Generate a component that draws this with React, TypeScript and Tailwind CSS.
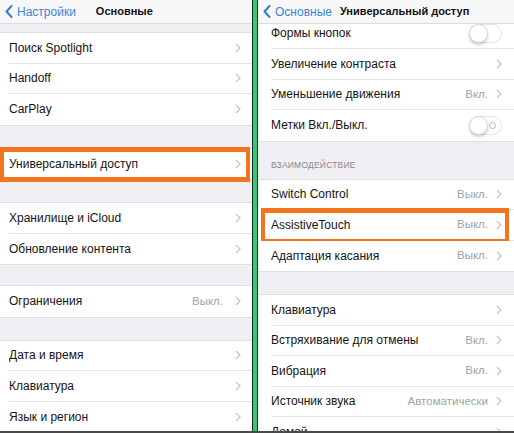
import React from "react";

const FONT = { fontFamily: '"Liberation Sans", Arial, sans-serif' };

function Chevron() {
  return (
    <svg width="6" height="10" viewBox="0 0 6 10" className="shrink-0">
      <polyline points="1,1 5,5 1,9" fill="none" stroke="#c4c4c9" strokeWidth="1.3" />
    </svg>
  );
}

function Toggle({ label }: { label?: boolean }) {
  return (
    <div className="relative w-[33px] h-[19px] rounded-full border border-[#e2e2e6] bg-white shrink-0">
      <div className="absolute left-[-1px] top-[-1px] w-[19px] h-[19px] rounded-full bg-white border border-[#d9d9de] shadow-[0_2px_3px_rgba(0,0,0,0.2)]" />
      {label && (
        <div className="absolute right-[5px] top-[5px] w-[7px] h-[7px] rounded-full border border-[#b8b8bd]" />
      )}
    </div>
  );
}

type Item = { text: string; value?: string; toggle?: "plain" | "label"; highlight?: boolean };

type Side = {
  pl: string;
  pr: string;
  valueGap: string;
  hl: string;
};

function Row({ text, value, toggle, highlight, last, side }: Item & { last?: boolean; side: Side }) {
  return (
    <div className={`relative h-[30.5px] bg-white flex items-center ${side.pl}`}>
      <div className={`flex-1 h-full flex items-center ${side.pr} ${last ? "" : "border-b border-[#e3e3e6]"}`}>
        <span className="flex-1 text-[12px] text-[#141414] truncate">{text}</span>
        {toggle ? (
          <Toggle label={toggle === "label"} />
        ) : (
          <div className={`flex items-center ${side.valueGap}`}>
            {value && <span className="text-[11.5px] text-[#a2a2a7]">{value}</span>}
            <Chevron />
          </div>
        )}
      </div>
      {highlight && (
        <div className={`absolute ${side.hl} top-[-2px] bottom-[-3px] border-x-[4px] border-y-[5px] border-[#f4741e] pointer-events-none`} />
      )}
    </div>
  );
}

function Group({ items, side, top = true }: { items: Item[]; side: Side; top?: boolean }) {
  return (
    <div className={`flex flex-col ${top ? "border-t border-[#e0e0e4]" : ""} border-b border-[#e0e0e4]`}>
      {items.map((it, i) => (
        <Row key={i} {...it} last={i === items.length - 1} side={side} />
      ))}
    </div>
  );
}

function NavBar({ back, title, titleGap }: { back: string; title: string; titleGap: string }) {
  return (
    <div className="h-[24px] shrink-0 bg-[#f7f7f8] border-b border-[#dcdcdf] flex items-center pl-[5px] relative z-10">
      <svg width="8" height="13" viewBox="0 0 8 13" className="shrink-0">
        <polyline points="6.5,1 1.5,6.5 6.5,12" fill="none" stroke="#2f7fd6" strokeWidth="2" strokeLinecap="round" strokeLinejoin="round" />
      </svg>
      <span className="ml-[4px] text-[12px] text-[#3a86d4]">{back}</span>
      <span className={`${titleGap} text-[11px] font-bold text-[#111]`}>{title}</span>
    </div>
  );
}

const LEFT: Side = { pl: "pl-[9px]", pr: "pr-[11px]", valueGap: "gap-[12px]", hl: "left-0 right-[2px]" };
const RIGHT: Side = { pl: "pl-[13px]", pr: "pr-[12px]", valueGap: "gap-[8px]", hl: "left-[3px] right-[5px]" };

function LeftPanel() {
  return (
    <div className="w-[252px] h-full flex flex-col bg-[#efeff4] overflow-hidden">
      <NavBar back="Настройки" title="Основные" titleGap="ml-[20px]" />
      <div className="h-[8px] shrink-0" />
      <Group side={LEFT} items={[{ text: "Поиск Spotlight" }, { text: "Handoff" }, { text: "CarPlay" }]} />
      <div className="h-[22px] shrink-0" />
      <Group side={LEFT} items={[{ text: "Универсальный доступ", highlight: true }]} />
      <div className="h-[22px] shrink-0" />
      <Group side={LEFT} items={[{ text: "Хранилище и iCloud" }, { text: "Обновление контента" }]} />
      <div className="h-[20px] shrink-0" />
      <Group side={LEFT} items={[{ text: "Ограничения", value: "Выкл." }]} />
      <div className="h-[22px] shrink-0" />
      <Group side={LEFT} items={[{ text: "Дата и время" }, { text: "Клавиатура" }, { text: "Язык и регион" }]} />
    </div>
  );
}

function RightPanel() {
  return (
    <div className="flex-1 h-full flex flex-col bg-[#efeff4] overflow-hidden">
      <NavBar back="Основные" title="Универсальный доступ" titleGap="ml-[8px]" />
      <div className="flex-1 overflow-hidden flex flex-col">
        <div className="-mt-[5.5px] flex flex-col">
          <Group
            side={RIGHT}
            top={false}
            items={[
              { text: "Формы кнопок", toggle: "plain" },
              { text: "Увеличение контраста" },
              { text: "Уменьшение движения", value: "Вкл." },
              { text: "Метки Вкл./Выкл.", toggle: "label" },
            ]}
          />
          <div className="h-[37px] shrink-0 flex items-end pl-[13px] pb-[7px]">
            <span className="text-[8.5px] tracking-[0.2px] text-[#8a8a8f]">ВЗАИМОДЕЙСТВИЕ</span>
          </div>
          <Group
            side={RIGHT}
            items={[
              { text: "Switch Control", value: "Выкл." },
              { text: "AssistiveTouch", value: "Выкл.", highlight: true },
              { text: "Адаптация касания", value: "Выкл." },
            ]}
          />
          <div className="h-[22px] shrink-0" />
          <Group
            side={RIGHT}
            items={[
              { text: "Клавиатура" },
              { text: "Встряхивание для отмены", value: "Вкл." },
              { text: "Вибрация", value: "Вкл." },
              { text: "Источник звука", value: "Автоматически" },
              { text: "Домой" },
            ]}
          />
        </div>
      </div>
    </div>
  );
}

export default function App() {
  return (
    <div className="w-[514px] h-[433px] flex flex-col bg-white overflow-hidden" style={FONT}>
      <div className="flex-1 flex min-h-0">
        <LeftPanel />
        <div className="w-[1px] bg-[#1d2a22] shrink-0" />
        <div className="w-[4px] bg-[#37c972] shrink-0" />
        <div className="w-[1px] bg-[#1d2a22] shrink-0" />
        <RightPanel />
      </div>
      <div className="h-[2px] bg-[#4a4a4a] shrink-0" />
    </div>
  );
}
